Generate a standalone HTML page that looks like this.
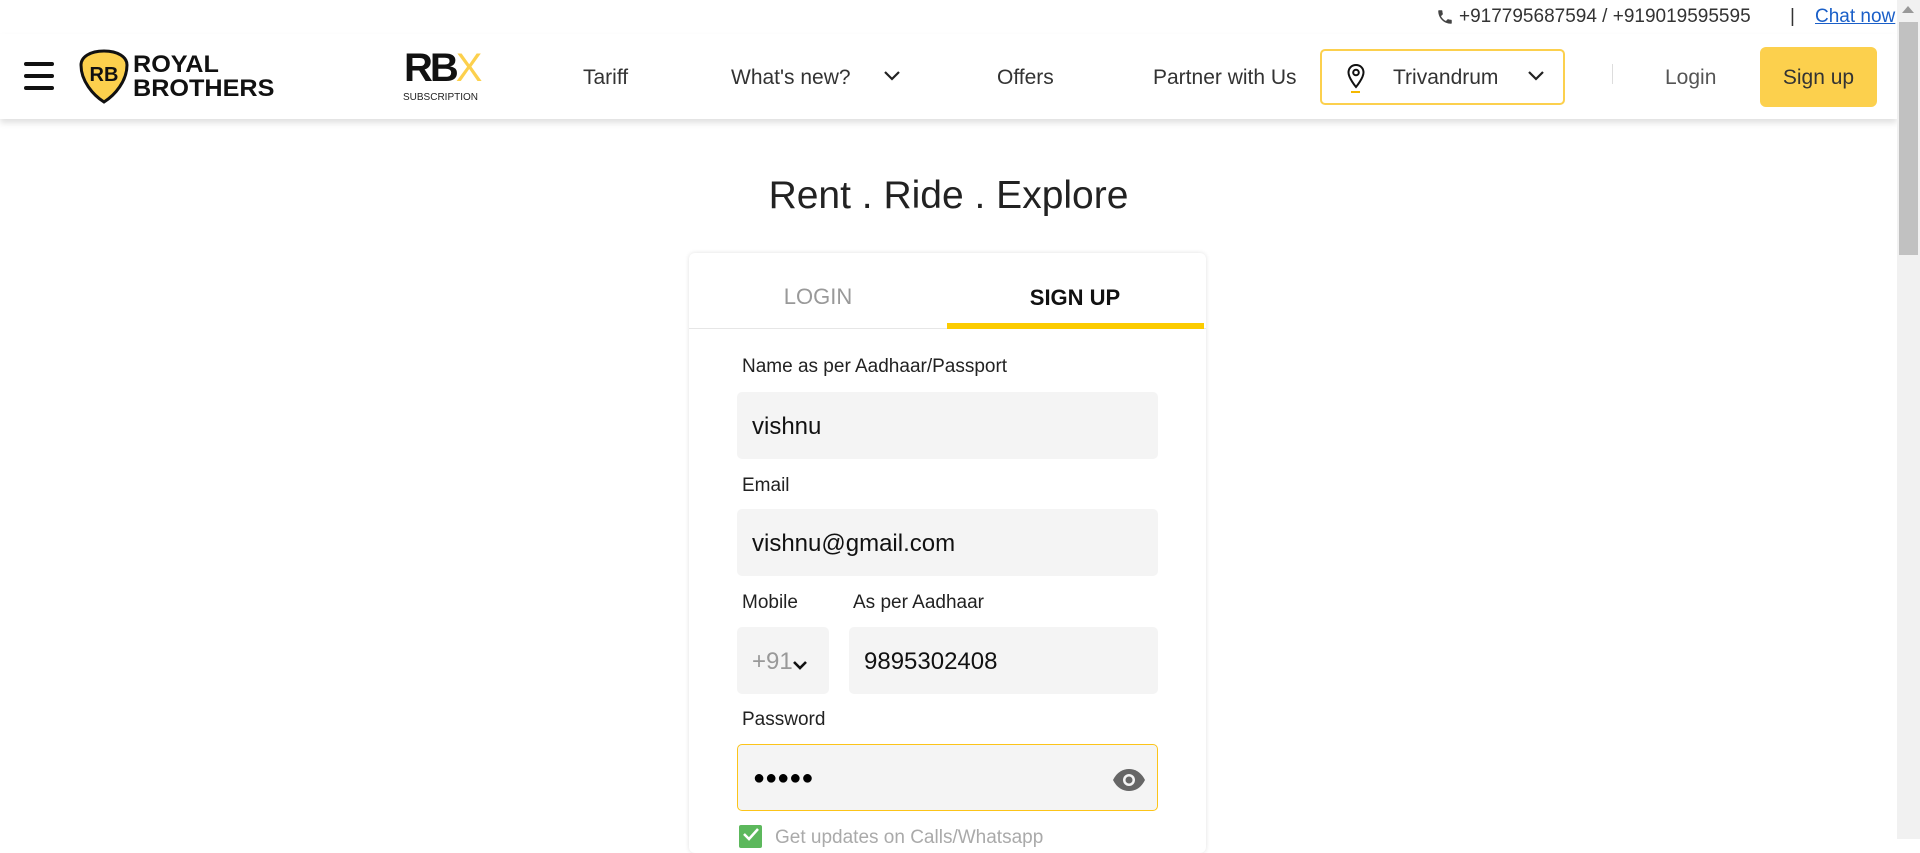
<!DOCTYPE html>
<html><head><meta charset="utf-8"><style>
*{box-sizing:border-box;margin:0;padding:0}
body{width:1920px;height:839px;overflow:hidden;background:#fff;font-family:"Liberation Sans",sans-serif;color:#222;position:relative}
.a{position:absolute}
.topbar{left:0;top:0;width:1897px;height:34px;background:#fff;font-size:19px;color:#333}
.nav{left:0;top:34px;width:1897px;height:85px;background:#fff;box-shadow:0 4px 6px rgba(0,0,0,.12)}
.nv{font-size:21px;color:#333;top:65px;line-height:26px}
.lbl{left:742px;font-size:19px;color:#222}
.inp{background:#f4f4f4;border-radius:5px}
.it{font-size:24px;color:#111}
</style></head><body>
<div class="a topbar">
 <svg class="a" style="left:1436px;top:7px" width="18" height="20" viewBox="0 0 24 24"><path fill="#444" d="M6.6 10.8c1.4 2.8 3.8 5.1 6.6 6.6l2.2-2.2c.3-.3.7-.4 1-.2 1.1.4 2.3.6 3.6.6.6 0 1 .4 1 1V20c0 .6-.4 1-1 1C10.6 21 3 13.4 3 4c0-.6.4-1 1-1h3.5c.6 0 1 .4 1 1 0 1.3.2 2.5.6 3.6.1.3 0 .7-.2 1z"/></svg>
 <span class="a" style="left:1459px;top:6px">+917795687594 / +919019595595</span>
 <span class="a" style="left:1790px;top:6px">|</span>
 <span class="a" style="left:1815px;top:6px;color:#1a5fc8;text-decoration:underline">Chat now</span>
</div>
<div class="a nav"></div>
<div class="a" style="left:24px;top:62px;width:30px;height:4px;background:#111;border-radius:2px"></div>
<div class="a" style="left:24px;top:74px;width:30px;height:4px;background:#111;border-radius:2px"></div>
<div class="a" style="left:24px;top:86px;width:30px;height:4px;background:#111;border-radius:2px"></div>
<svg class="a" style="left:78px;top:49px" width="52" height="55" viewBox="0 0 52 55"><path d="M26 2C12 2 3 8 3 16c0 16 12 30 23 37 11-7 23-21 23-37 0-8-9-14-23-14z" fill="#fcd04d" stroke="#111" stroke-width="3"/><text x="26" y="32" font-family="Liberation Sans" font-weight="bold" font-size="20" text-anchor="middle" fill="#111">RB</text></svg>
<div class="a" style="left:133px;top:53px;font-size:24px;font-weight:bold;line-height:24px;color:#111;transform:scaleX(1.05);transform-origin:left">ROYAL<br>BROTHERS</div>
<div class="a" style="left:404px;top:46px;font-size:40px;font-weight:bold;letter-spacing:-3px;color:#111">RB<span style="color:#fcd04d;font-weight:normal">X</span></div>
<div class="a" style="left:403px;top:92px;font-size:10px;color:#222">SUBSCRIPTION</div>
<div class="a nv" style="left:583px">Tariff</div>
<div class="a nv" style="left:731px">What's new?</div>
<svg class="a" style="left:883px;top:70px" width="18" height="12" viewBox="0 0 18 12"><path d="M2 2l7 7 7-7" stroke="#222" stroke-width="2.2" fill="none"/></svg>
<div class="a nv" style="left:997px">Offers</div>
<div class="a nv" style="left:1153px">Partner with Us</div>
<div class="a" style="left:1320px;top:49px;width:245px;height:56px;border:2px solid #fcd04d;border-radius:5px"></div>
<svg class="a" style="left:1346px;top:63px" width="20" height="32" viewBox="0 0 20 32"><path d="M10 2C5.5 2 2.5 5.3 2.5 9.5 2.5 15 10 24 10 24s7.5-9 7.5-14.5C17.5 5.3 14.5 2 10 2z" stroke="#111" stroke-width="2" fill="none"/><circle cx="10" cy="9.5" r="2.8" stroke="#111" stroke-width="2" fill="none"/><rect x="5" y="28" width="9" height="2" fill="#f5b800"/></svg>
<div class="a nv" style="left:1393px">Trivandrum</div>
<svg class="a" style="left:1527px;top:70px" width="18" height="12" viewBox="0 0 18 12"><path d="M2 2l7 7 7-7" stroke="#222" stroke-width="2.2" fill="none"/></svg>
<div class="a" style="left:1612px;top:64px;width:1px;height:20px;background:#ddd"></div>
<div class="a nv" style="left:1665px;color:#555">Login</div>
<div class="a" style="left:1760px;top:47px;width:117px;height:60px;background:#fcd04d;border-radius:6px;font-size:21px;line-height:62px;text-align:center;color:#333">Sign up</div>
<div class="a" style="left:1897px;top:0;width:23px;height:839px;background:#f1f1f1"></div>
<div class="a" style="left:1899px;top:22px;width:19px;height:233px;background:#c1c1c1"></div>
<div class="a" style="left:1902px;top:6px;width:0;height:0;border-left:6px solid transparent;border-right:6px solid transparent;border-bottom:7px solid #999"></div>

<div class="a" style="left:0;width:1897px;top:174px;text-align:center;font-size:39px;color:#222">Rent . Ride . Explore</div>
<div class="a" style="left:689px;top:253px;width:517px;height:600px;border-radius:6px;box-shadow:0 0 5px rgba(0,0,0,.12);background:#fff"></div>
<div class="a" style="left:689px;top:284px;width:258px;text-align:center;font-size:22px;color:#999">LOGIN</div>
<div class="a" style="left:946px;top:285px;width:258px;text-align:center;font-size:22px;font-weight:bold;color:#111">SIGN UP</div>
<div class="a" style="left:689px;top:328px;width:517px;height:1px;background:#e6e6e6"></div>
<div class="a" style="left:947px;top:323px;width:257px;height:6px;background:#fccc00"></div>

<div class="a lbl" style="top:356px">Name as per Aadhaar/Passport</div>
<div class="a inp" style="left:737px;top:392px;width:421px;height:67px"></div>
<div class="a it" style="left:752px;top:413px">vishnu</div>
<div class="a lbl" style="top:475px">Email</div>
<div class="a inp" style="left:737px;top:509px;width:421px;height:67px"></div>
<div class="a it" style="left:752px;top:530px">vishnu@gmail.com</div>
<div class="a lbl" style="top:592px">Mobile</div>
<div class="a lbl" style="left:853px;top:592px">As per Aadhaar</div>
<div class="a inp" style="left:737px;top:627px;width:92px;height:67px"></div>
<div class="a it" style="left:752px;top:648px;color:#999">+91</div>
<svg class="a" style="left:792px;top:659px" width="16" height="12" viewBox="0 0 16 12"><path d="M2 3l6 6 6-6" stroke="#111" stroke-width="2.6" fill="none"/></svg>
<div class="a inp" style="left:849px;top:627px;width:309px;height:67px"></div>
<div class="a it" style="left:864px;top:648px">9895302408</div>
<div class="a lbl" style="top:709px">Password</div>
<div class="a inp" style="left:737px;top:744px;width:421px;height:67px;border:1.5px solid #fcc419"></div>
<div class="a" style="left:753px;top:767px;font-size:20px;color:#000">●●●●●</div>
<svg class="a" style="left:1112px;top:768px" width="34" height="24" viewBox="0 0 34 24"><path d="M1 12C5 4 11 1 17 1s12 3 16 11c-4 8-10 11-16 11S5 20 1 12z" fill="#666"/><circle cx="17" cy="12" r="6" fill="#f4f4f4"/><circle cx="17" cy="12" r="3.5" fill="#666"/></svg>
<div class="a" style="left:739px;top:825px;width:23px;height:23px;background:#5cb85c;border-radius:2px"></div>
<svg class="a" style="left:741px;top:827px" width="19" height="14" viewBox="0 0 19 14"><path d="M3 7l5 5 9-10" stroke="#fff" stroke-width="2.5" fill="none"/></svg>
<div class="a" style="left:775px;top:827px;font-size:19px;color:#aaa">Get updates on Calls/Whatsapp</div>
</body></html>
